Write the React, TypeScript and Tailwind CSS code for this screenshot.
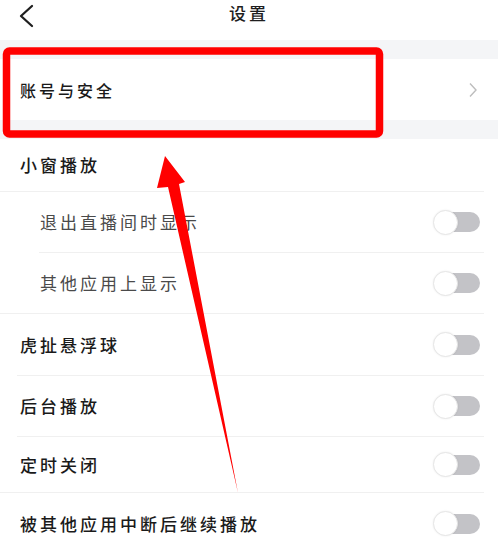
import React from "react";

const font = { fontFamily: '"Noto Sans CJK SC", "Noto Sans", sans-serif' };

function Toggle() {
  return (
    <div className="flex items-center w-[47px] h-[25px] shrink-0">
      <div className="z-10 h-[25px] w-[25px] shrink-0 rounded-full bg-white border border-[#e6e6e6] shadow-[0_0_2px_rgba(0,0,0,0.08)]" />
      <div className="-ml-[18px] h-[20px] w-[40px] rounded-full bg-[#c3c3c7]" />
    </div>
  );
}

type Row = {
  label: string;
  sub?: boolean;
  height: string;
  wrap: string;
  toggle?: boolean;
};

// wrap sets where the divider under a row starts and ends
const rows: Row[] = [
  { label: "小窗播放", height: "h-[53px]", wrap: "mr-[14px] border-b pl-5" },
  { label: "退出直播间时显示", sub: true, height: "h-[61px]", wrap: "ml-[39px] mr-[14px] border-b pl-px", toggle: true },
  { label: "其他应用上显示", sub: true, height: "h-[61px]", wrap: "mr-[14px] border-b pl-10", toggle: true },
  { label: "虎扯悬浮球", height: "h-[62px]", wrap: "ml-[17px] mr-[14px] border-b pl-[3px]", toggle: true },
  { label: "后台播放", height: "h-[61px]", wrap: "ml-[17px] mr-[14px] border-b pl-[3px]", toggle: true },
  { label: "定时关闭", height: "h-[56px]", wrap: "mr-[14px] border-b pl-5", toggle: true },
  { label: "被其他应用中断后继续播放", height: "h-[61px]", wrap: "mr-[14px] pl-5", toggle: true },
];

export default function App() {
  return (
    <div className="relative w-[498px] h-[549px] overflow-hidden bg-white" style={font}>
      {/* Header */}
      <div className="h-[40px] flex items-start pt-[2px] px-[18px]">
        <div className="w-[40px] pt-[2px]">
          <svg width="18" height="24" viewBox="0 0 18 24">
            <polyline points="14,2 3,12 14,22" fill="none" stroke="#1f1f1f" strokeWidth="2.3" strokeLinecap="round" strokeLinejoin="round" />
          </svg>
        </div>
        <div className="flex-1 flex justify-center">
          <span className="text-[17px] leading-[22px] font-medium tracking-[3px] text-[#1e1e1e]">设置</span>
        </div>
        <div className="w-[40px]" />
      </div>

      <div className="h-[19px] bg-[#f4f5f7]" />

      <div className="h-[61px] flex items-center justify-between pl-5 pr-[20px]">
        <span className="text-[16px] font-medium tracking-[3px] text-[#1a1a1a]">账号与安全</span>
        <svg width="10" height="16" viewBox="0 0 10 16">
          <polyline points="2,1.5 8,8 2,14.5" fill="none" stroke="#bdbdbd" strokeWidth="1.4" />
        </svg>
      </div>

      <div className="h-[19px] bg-[#f4f5f7]" />

      {rows.map((r) => (
        <div key={r.label} className={`${r.wrap} border-[#f0f0f0] ${r.height} flex items-center justify-between pr-1`}>
          <span className={`text-[17px] tracking-[3px] ${r.sub ? "text-[#4a4a4a]" : "font-medium text-[#1a1a1a]"}`}>
            {r.label}
          </span>
          {r.toggle && <Toggle />}
        </div>
      ))}

      {/* Annotation overlay: red box and arrow */}
      <svg className="absolute inset-0 pointer-events-none" width="498" height="549" viewBox="0 0 498 549">
        <rect x="6.5" y="51" width="373" height="83" rx="3" fill="none" stroke="#ff0000" strokeWidth="7.5" />
        <polygon points="165,156 185,182 179,184 238,493 168,187 157,188" fill="#ff0000" />
      </svg>
    </div>
  );
}
